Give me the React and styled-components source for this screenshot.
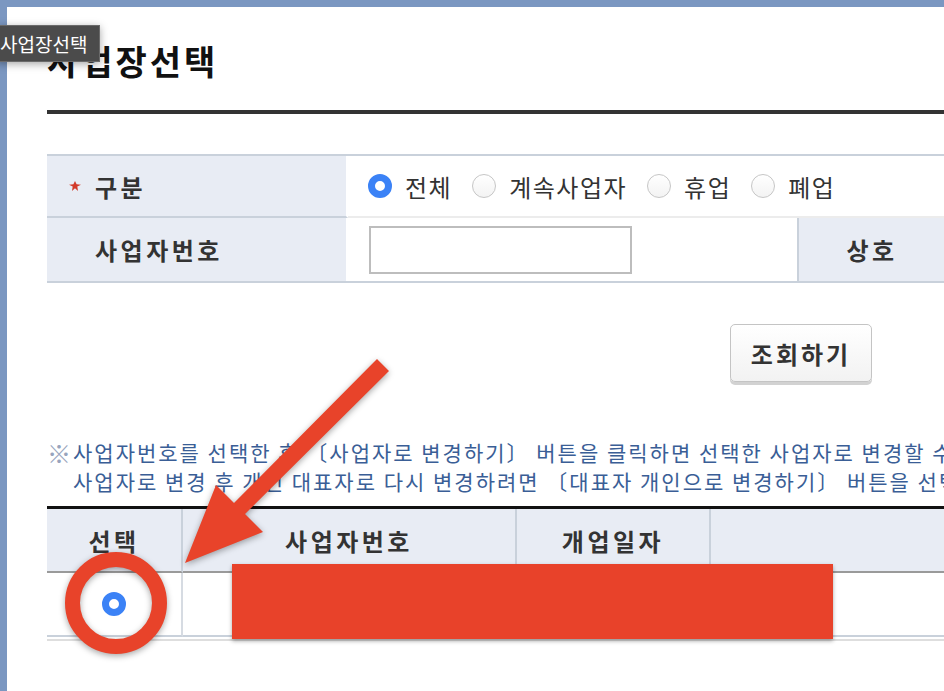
import React, { useState } from 'react'
import styled, { createGlobalStyle } from 'styled-components'

const GlobalStyle = createGlobalStyle`
    html, body {
        margin: 0;
        padding: 0;
        background: #7b97c1;
    }
    * { box-sizing: border-box; }
`

const FONT = `"Noto Sans CJK KR", "Noto Sans", sans-serif`

const Frame = styled.div`
    position: relative;
    width: 944px;
    height: 691px;
    overflow: hidden;
    background: #7b97c1;
    padding: 7px 0 0 7px;
    font-family: ${FONT};
    color: #333;
`

const Page = styled.div`
    height: 100%;
    width: 1400px;
    background: #fff;
    padding: 33px 0 0 40px;
    white-space: nowrap;
`

const Title = styled.h1`
    margin: 0;
    font-size: 34px;
    line-height: 41px;
    font-weight: 700;
    letter-spacing: 3px;
    color: #111;
`

const TitleRule = styled.div`
    margin-top: 29px;
    height: 4px;
    background: #333;
`

const Tooltip = styled.div`
    position: absolute;
    left: -4px;
    top: 25px;
    height: 37px;
    padding: 0 12px 0 3px;
    display: flex;
    align-items: center;
    background: #4b4b4b;
    border: 1px solid #6a6a6a;
    color: #fff;
    font-size: 19px;
    box-shadow: 0 2px 8px rgba(0, 0, 0, 0.35);
    z-index: 5;
`

const FormGrid = styled.div`
    margin-top: 40px;
    display: grid;
    grid-template-columns: 301px 449px 150px 400px;
    grid-template-rows: 62px 63px;
    border-top: 2px solid #c9d1db;
    border-bottom: 2px solid #c9d1db;
`

const LabelCell = styled.div`
    display: flex;
    align-items: center;
    background: #e8ecf4;
    font-size: 24px;
    font-weight: 700;
    letter-spacing: 3.5px;
    color: #333;
    padding-left: ${({ $pad }) => $pad || 0}px;
    justify-content: ${({ $center }) => $center ? 'center' : 'flex-start'};
    border-right: 2px solid #fff;
    border-left: ${({ $leftLine }) => $leftLine ? '2px solid #c9d1db' : 'none'};
    border-bottom: ${({ $sep }) => $sep ? '2px solid #c9d1db' : 'none'};
`

const ValueCell = styled.div`
    display: flex;
    align-items: center;
    padding-left: 20px;
    grid-column: ${({ $span }) => $span ? `span ${$span}` : 'auto'};
    border-bottom: ${({ $sep }) => $sep ? '2px solid #ececec' : 'none'};
`

const StarSlot = styled.span`
    width: 48px;
    padding-left: 22px;
    display: flex;
    align-items: center;
`

const RadioOption = styled.label`
    display: flex;
    align-items: center;
    margin-right: 20px;
    font-size: 24px;
    letter-spacing: 1.5px;
    color: #333;
`

const RadioDot = styled.span`
    display: inline-block;
    width: 24px;
    height: 24px;
    border-radius: 50%;
    margin-right: ${({ $bare }) => $bare ? 0 : 13}px;
    flex-shrink: 0;
    background: ${({ $checked }) => $checked ? '#fff' : 'linear-gradient(#fff, #f3f3f3)'};
    border: ${({ $checked }) => $checked ? '7px solid #3b82f6' : '1px solid #c6c6c6'};
`

const TextField = styled.input`
    width: 263px;
    height: 48px;
    margin-left: 1px;
    border: 2px solid #bdbdbd;
    background: #fff;
    outline: none;
    padding: 0 8px;
    font-family: ${FONT};
    font-size: 18px;
`

const ButtonRow = styled.div`
    display: flex;
    padding-left: 683px;
    margin-top: 41px;
`

const SearchButton = styled.button`
    width: 142px;
    height: 58px;
    border: 1px solid #c4c4c4;
    border-radius: 5px;
    background: linear-gradient(#fff, #f2f2f2);
    box-shadow: 0 3px 0 #d2d2d2;
    font-family: ${FONT};
    font-size: 24px;
    font-weight: 700;
    letter-spacing: 3px;
    color: #333;
    cursor: pointer;
`

const Notice = styled.div`
    margin-top: 56px;
    display: flex;
    font-size: 21px;
    line-height: 29px;
    letter-spacing: 2px;
    color: #3a5e96;
`

const NoticeMark = styled.span`
    width: 26px;
    font-size: 24px;
    letter-spacing: 0;
    color: #97a4bd;
    flex-shrink: 0;
`

const ResultGrid = styled.div`
    margin-top: 10px;
    display: grid;
    grid-template-columns: 136px 334px 194px 400px;
    border-top: 3px solid #111;
`

const HeadCell = styled.div`
    height: 64px;
    display: flex;
    align-items: center;
    justify-content: center;
    background: #e8ecf4;
    font-size: 24px;
    font-weight: 700;
    letter-spacing: 3.5px;
    color: #333;
    border-bottom: 2px solid #9a9a9a;
    border-right: 2px solid #c9d1db;
`

const BodyCell = styled.div`
    height: 64px;
    display: flex;
    align-items: center;
    justify-content: center;
    border-bottom: 2px solid #c9d1db;
    border-right: ${({ $line }) => $line ? '2px solid #d6dbe2' : 'none'};
`

const TableFoot = styled.div`
    margin-top: 2px;
    height: 2px;
    background: #dedede;
`

const Annotation = styled.svg`
    position: absolute;
    left: 0;
    top: 0;
    width: 944px;
    height: 691px;
    pointer-events: none;
    z-index: 4;
    filter: drop-shadow(0 2px 3px rgba(0, 0, 0, 0.35));
`

const RedBox = styled.div`
    position: absolute;
    left: 232px;
    top: 564px;
    width: 601px;
    height: 75px;
    background: #e8422a;
    box-shadow: 0 2px 4px rgba(0, 0, 0, 0.35);
    z-index: 3;
`

function Star() {
    return (
        <svg width="12" height="10" viewBox="0 0 12 10">
            <polygon points="6,0 7.6,3.2 12,3.8 8.3,5.6 9,10 6,7.3 3,10 3.7,5.6 0,3.8 4.4,3.2" fill="#d23a2a" />
        </svg>
    )
}

export default function App()
{
    const [kind, setKind] = useState('all')
    const options = [
        ['all', '전체'],
        ['active', '계속사업자'],
        ['pause', '휴업'],
        ['closed', '폐업'],
    ]

    return (
        <Frame>
            <GlobalStyle />
            <Tooltip>사업장선택</Tooltip>
            <Page>
                <Title>사업장선택</Title>
                <TitleRule />

                <FormGrid>
                    <LabelCell $sep>
                        <StarSlot><Star /></StarSlot>구분
                    </LabelCell>
                    <ValueCell $span={3} $sep>
                        {options.map(([key, text]) => (
                            <RadioOption key={key} onClick={() => setKind(key)}>
                                <RadioDot $checked={kind === key} />
                                {text}
                            </RadioOption>
                        ))}
                    </ValueCell>
                    <LabelCell $pad={48}>사업자번호</LabelCell>
                    <ValueCell><TextField type="text" /></ValueCell>
                    <LabelCell $center $leftLine>상호</LabelCell>
                    <ValueCell />
                </FormGrid>

                <ButtonRow>
                    <SearchButton>조회하기</SearchButton>
                </ButtonRow>

                <Notice>
                    <NoticeMark>※</NoticeMark>
                    <div>
                        사업자번호를 선택한 후 〔사업자로 변경하기〕 버튼을 클릭하면 선택한 사업자로 변경할 수 있습니다.<br />
                        사업자로 변경 후 개인 대표자로 다시 변경하려면 〔대표자 개인으로 변경하기〕 버튼을 선택하세요.
                    </div>
                </Notice>

                <ResultGrid>
                    <HeadCell>선택</HeadCell>
                    <HeadCell>사업자번호</HeadCell>
                    <HeadCell>개업일자</HeadCell>
                    <HeadCell />
                    <BodyCell $line><RadioDot $checked $bare /></BodyCell>
                    <BodyCell />
                    <BodyCell />
                    <BodyCell />
                </ResultGrid>
                <TableFoot />
            </Page>

            <RedBox />
            <Annotation viewBox="0 0 944 691">
                <circle cx="116" cy="603" r="43.5" fill="none" stroke="#e8432a" strokeWidth="15" />
                <polygon
                    points="377,359 234,503 216,485 185,563 263,532 245,514 389,371"
                    fill="#e8432a"
                />
            </Annotation>
        </Frame>
    )
}
